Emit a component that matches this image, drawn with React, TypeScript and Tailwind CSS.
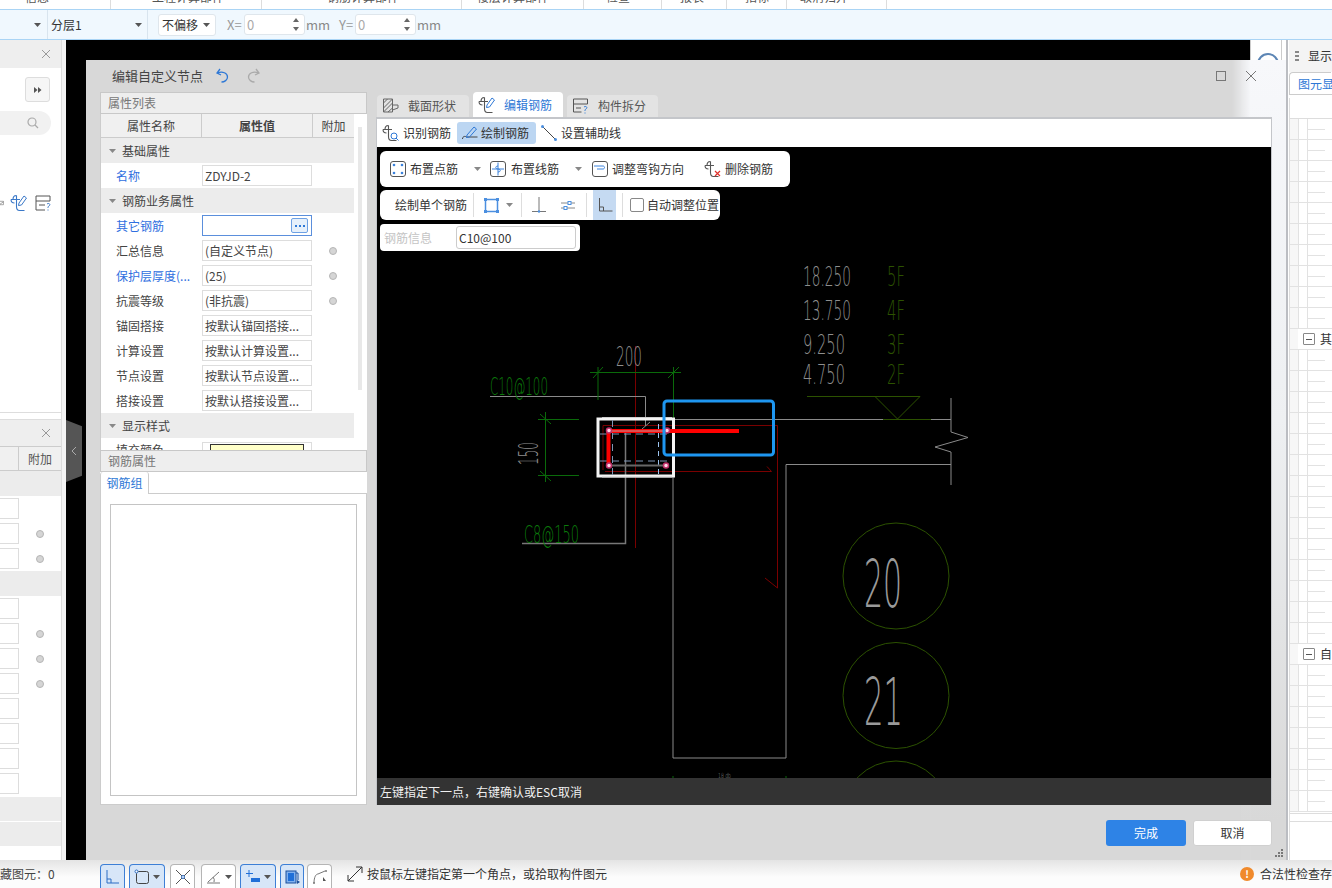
import React from 'react';

const Caret = ({ c = '#555' }: { c?: string }) => (
  <svg width="7" height="4" viewBox="0 0 7 4" className="shrink-0"><path d="M0 0h7L3.5 4z" fill={c} /></svg>
);

const Rebar = ({ c = '#555' }: { c?: string }) => (
  <path d="M1 5.500h9M6.500 1.500v11c0 2.500 1 4 3 4h5M6.500 1.500c-3 0-3.500 2-3.500 4M1 5.500c0 2.500 1.500 3.500 3.500 3.500" fill="none" stroke={c} strokeWidth="1.100" />
);

const Ico = ({ s = 18, children }: { s?: number; children: React.ReactNode }) => (
  <svg width={s} height={s} viewBox="0 0 18 18" fill="none" className="shrink-0">{children}</svg>
);

const Dot = () => <span className="block h-2 w-2 rounded-full border border-[#b5b5b5] bg-[#d5d5d5]" />;

type RowT = { l: string; v?: string; blue?: boolean; dot?: boolean; focus?: boolean };

const Row = ({ l, v, blue, dot, focus }: RowT) => (
  <div className="flex h-[25px] items-center">
    <div className={`w-[101px] pl-[15px] ${blue ? 'text-[#2f6fe0]' : 'text-[#444]'}`}>{l}</div>
    {focus ? (
      <div className="flex h-[21px] w-[110px] items-center justify-end border border-[#5b8fdc] pr-[3px]">
        <span className="flex h-[15px] w-[17px] items-center justify-center gap-[2px] rounded-[2px] border border-[#6ea1e4] bg-[#e6f0fb]">
          <span className="h-[2px] w-[2px] bg-[#2e78d6]" />
          <span className="h-[2px] w-[2px] bg-[#2e78d6]" />
          <span className="h-[2px] w-[2px] bg-[#2e78d6]" />
        </span>
      </div>
    ) : (
      <div className="flex h-[21px] w-[110px] items-center border border-[#ddd] pl-[2px] text-[#444]">{v}</div>
    )}
    <div className="flex w-[42px] justify-center">{dot && <Dot />}</div>
  </div>
);

const Group = ({ t }: { t: string }) => (
  <div className="flex h-[25px] items-center bg-[#ececec] pl-[8px] text-[#444]">
    <Caret c="#888" />
    <span className="ml-[6px]">{t}</span>
  </div>
);

const PanelHead = ({ t }: { t: string }) => (
  <div className="flex h-[22px] shrink-0 items-center border border-[#c8c8c8] bg-[#eeeeee] pl-[7px] text-[#777]">{t}</div>
);

const CadText = ({ x, y, w, size, c, children }: { x: number; y: number; w: number; size: number; c: string; children: string }) => (
  <text x={x} y={y} textLength={w} lengthAdjust="spacingAndGlyphs" fontSize={size} fill={c} className="font-['DejaVu_Sans',sans-serif] font-extralight">{children}</text>
);

const Cad = () => (
  <svg width="894" height="631" viewBox="377 147 894 631" className="block">
    <g fill="none">
      <path d="M807 396.500H920L897.500 419L875 396.500" stroke="#2c5200" />
      <path d="M673 419.500H951" stroke="#8a8a8a" />
      <path d="M883 419.500H931" stroke="#2c5200" />
      <path d="M951 398V432L968 437.500L935 447L951 452V485" stroke="#8a8a8a" />
      <path d="M951 464.500H786V758H673V476" stroke="#8a8a8a" />
      <path d="M635.500 346V548" stroke="#7a0000" />
      <path d="M603 470V425.500H777.500V588L765 578" stroke="#7a0000" />
      <path d="M605 471.500H771.500L767 466.500" stroke="#7a0000" />
      <path d="M490 396.500H645.500V426L642 429M645.500 426L650 422" stroke="#8a8a8a" />
      <path d="M625.500 433V543.500H522" stroke="#777" strokeWidth="1.500" />
      <path d="M590 372.500H681M598 367V400M673.500 367V418M593 378L603 367M668 378L679 367" stroke="#0a6a0a" />
      <path d="M538 419.500H579M538 475.500H579M545.500 412V482M540 414L551 424M540 471L551 481" stroke="#0a6a0a" />
      <path d="M673 776V778M786 776V778" stroke="#0a6a0a" />
      <rect x="598" y="419" width="75.500" height="57" stroke="#f4f4f4" strokeWidth="3" />
      <path d="M602 417.500H672M602 477H672" stroke="#cfcfcf" />
      <path d="M600 434H672M600 461H672M612.500 420V475" stroke="#7f95b5" strokeDasharray="7 5" />
      <path d="M658.500 424V475" stroke="#9cc3ef" strokeDasharray="5 4" />
      <path d="M610 465.500H666" stroke="#666" strokeWidth="2" />
      <path d="M608.500 467V431H739" stroke="#ff0000" strokeWidth="4" />
      <path d="M612 431H666" stroke="#b9a0a0" strokeWidth="1" />
      <g fill="#ffd5e5" stroke="#c0306a" strokeWidth="1.500">
        <circle cx="609" cy="430.500" r="2.500" />
        <circle cx="667" cy="430.500" r="2.500" />
        <circle cx="609" cy="465.500" r="2.500" />
        <circle cx="666" cy="465.500" r="2.500" />
      </g>
      <rect x="664" y="401" width="109.500" height="54" rx="3" stroke="#1e96f0" strokeWidth="3" />
      <ellipse cx="896" cy="576" rx="53" ry="53" stroke="#2c5200" />
      <ellipse cx="896" cy="695.500" rx="53" ry="53" stroke="#2c5200" />
      <ellipse cx="896" cy="814" rx="53" ry="53" stroke="#2c5200" />
    </g>
    <CadText x={803} y={286} w={48} size={26} c="#8e8e8e">18.250</CadText>
    <CadText x={803} y={320} w={48} size={26} c="#8e8e8e">13.750</CadText>
    <CadText x={803} y={354} w={42} size={26} c="#8e8e8e">9.250</CadText>
    <CadText x={803} y={384} w={42} size={26} c="#8e8e8e">4.750</CadText>
    <CadText x={887} y={286} w={18} size={26} c="#2c5200">5F</CadText>
    <CadText x={887} y={320} w={18} size={26} c="#2c5200">4F</CadText>
    <CadText x={887} y={354} w={18} size={26} c="#2c5200">3F</CadText>
    <CadText x={887} y={384} w={18} size={26} c="#2c5200">2F</CadText>
    <CadText x={616} y={366} w={26} size={26} c="#8e8e8e">200</CadText>
    <CadText x={490} y={395} w={58} size={25} c="#0b7a0b">C10@100</CadText>
    <CadText x={524} y={543} w={55} size={25} c="#0b7a0b">C8@150</CadText>
    <g transform="rotate(-90 538 465)">
      <CadText x={538} y={465} w={23} size={26} c="#8e8e8e">150</CadText>
    </g>
    <CadText x={864} y={607} w={38} size={66} c="#9a9a9a">20</CadText>
    <CadText x={864} y={725} w={39} size={66} c="#9a9a9a">21</CadText>
    <CadText x={718} y={778} w={13} size={7} c="#999">18 db</CadText>
  </svg>
);

const TopTab = ({ w, pl, t }: { w: number; pl: number; t: string }) => (
  <div className="h-full shrink-0 overflow-hidden border-r border-[#ddd]" style={{ width: w, paddingLeft: pl }}>
    <div className="-mt-[12px] leading-[17px] whitespace-nowrap text-[#555]">{t}</div>
  </div>
);

const Spin = () => (
  <div className="flex h-[21px] w-[61px] items-center justify-between rounded-[3px] border border-[#dfe6ec] bg-white pr-[5px] pl-[2px] text-[13px] text-[#aaa]">
    <span>0</span>
    <span className="flex flex-col gap-[5px]">
      <svg width="6" height="4" viewBox="0 0 6 4"><path d="M3 0l3 4H0z" fill="#666" /></svg>
      <svg width="6" height="4" viewBox="0 0 6 4"><path d="M3 4L0 0h6z" fill="#666" /></svg>
    </span>
  </div>
);

const rows1: RowT[] = [
  { l: '其它钢筋', blue: true, focus: true },
  { l: '汇总信息', v: '(自定义节点)', dot: true },
  { l: '保护层厚度(...', v: '(25)', blue: true, dot: true },
  { l: '抗震等级', v: '(非抗震)', dot: true },
  { l: '锚固搭接', v: '按默认锚固搭接...' },
  { l: '计算设置', v: '按默认计算设置...' },
  { l: '节点设置', v: '按默认节点设置...' },
  { l: '搭接设置', v: '按默认搭接设置...' },
];

const Cell = ({ dot }: { dot?: boolean }) => (
  <div className="flex h-[25px] items-center">
    <div className="h-[21px] w-[19px] border border-l-0 border-[#ddd]" />
    {dot && <div className="ml-[17px]"><Dot /></div>}
  </div>
);

const StatBtn = ({ on, w, children, caret }: { on?: boolean; w: number; children: React.ReactNode; caret?: boolean }) => (
  <div className={`flex h-[24px] shrink-0 items-center justify-center gap-[3px] rounded-t-[4px] border border-b-0 ${on ? 'border-[#3d7fd6] bg-[#d7e6f8]' : 'border-[#b5b5b5] bg-white'}`} style={{ width: w }}>
    {children}
    {caret && <Caret c="#555" />}
  </div>
);

const treeRows = Array.from({ length: 33 }, (_, i) => i);

export default function App() {
  return (
    <div className="relative flex h-[888px] w-[1332px] flex-col overflow-hidden bg-white font-['Noto_Sans_CJK_SC',sans-serif] text-xs text-[#333]">
      {/* top ribbon remains */}
      <div className="flex h-[9px] overflow-hidden bg-white">
        <TopTab w={111} pl={25} t="信息" />
        <TopTab w={151} pl={41} t="工程计算部件" />
        <TopTab w={200} pl={65} t="钢筋计算部件" />
        <TopTab w={122} pl={15} t="楼层计算部件" />
        <TopTab w={78} pl={22} t="检查" />
        <TopTab w={65} pl={18} t="报表" />
        <TopTab w={60} pl={18} t="指标" />
        <TopTab w={100} pl={13} t="取消归并" />
      </div>
      {/* toolbar */}
      <div className="flex h-[31px] items-center border-y border-[#a9d4f5] bg-[#f0f8fe]">
        <div className="flex h-full w-[48px] items-center justify-end border-r border-[#d8e4ee] pr-[6px]"><Caret /></div>
        <div className="flex h-full w-[100px] items-center justify-between border-r border-[#d8e4ee] pr-[5px] pl-[3px]">
          <span>分层1</span><Caret />
        </div>
        <div className="ml-[10px] flex h-[22px] w-[58px] items-center justify-between rounded-[3px] border border-[#dfe6ec] bg-white pr-[5px] pl-[3px]">
          <span>不偏移</span><Caret />
        </div>
        <span className="ml-[11px] w-[17px] text-[13px] text-[#999]">X=</span>
        <Spin />
        <span className="ml-[1px] w-[33px] text-[13px] text-[#888]">mm</span>
        <span className="w-[16px] text-[13px] text-[#999]">Y=</span>
        <Spin />
        <span className="ml-[1px] text-[13px] text-[#888]">mm</span>
      </div>
      {/* main */}
      <div className="flex h-[820px]">
        {/* left docks */}
        <div className="flex w-[66px] shrink-0 bg-[#f4f4f4]">
          <div className="flex w-[62px] flex-col gap-[6px] border-r border-[#ddd] bg-white">
            <div className="flex h-[373px] flex-col border-b border-[#ddd]">
              <div className="flex h-[28px] items-center justify-end bg-[#eeeeee] pr-[10px]">
                <svg width="10" height="10" viewBox="0 0 10 10"><path d="M1 1l8 8M9 1l-8 8" stroke="#999" /></svg>
              </div>
              <div className="mt-[9px] flex justify-end pr-[11px]">
                <div className="flex h-[25px] w-[25px] items-center justify-center rounded-[3px] border border-[#ddd] bg-[#f6f6f6]">
                  <svg width="8" height="6" viewBox="0 0 8 6"><path d="M0 0l3.500 3L0 6zM4 0l3.500 3L4 6z" fill="#555" /></svg>
                </div>
              </div>
              <div className="mt-[9px] mr-[10px] flex h-[24px] items-center justify-end rounded-r-full bg-[#f1f1f1] pr-[12px]">
                <svg width="12" height="12" viewBox="0 0 12 12" fill="none"><circle cx="5" cy="5" r="4" stroke="#aaa" strokeWidth="1.200" /><path d="M8 8l3 3" stroke="#aaa" strokeWidth="1.200" /></svg>
              </div>
              <div className="mt-[59px] flex items-center gap-[6px] pr-[9px]">
                <svg width="7" height="8" viewBox="0 0 7 8" fill="none"><path d="M0 1h6v6H0M0 6l6-4" stroke="#666" /></svg>
                <Ico s={18}><Rebar c="#3a78c8" /><path d="M9 9l5-7 2.500 2-5 7-3 .5z" stroke="#3a78c8" /></Ico>
                <Ico s={18}><path d="M2 2h14v5H2zM2 7v9h9M5 11h6" stroke="#555" /><path d="M13 10c2-1.500 4 .5 2 2-1 .5-1 1-1 2M14 15.500v1" stroke="#3a78c8" /></Ico>
              </div>
            </div>
            <div className="flex min-h-0 flex-1 flex-col">
              <div className="flex h-[27px] items-center justify-end border-t border-[#ddd] bg-[#eeeeee] pr-[10px]">
                <svg width="10" height="10" viewBox="0 0 10 10"><path d="M1 1l8 8M9 1l-8 8" stroke="#999" /></svg>
              </div>
              <div className="flex h-[25px] border-y border-[#ccc] bg-[#f0f0f0]">
                <div className="w-[19px] border-r border-[#ccc]" />
                <div className="flex flex-1 items-center justify-center text-[#555]">附加</div>
              </div>
              <div className="h-[25px] bg-[#ececec]" />
              <Cell /><Cell dot /><Cell dot />
              <div className="h-[25px] bg-[#ececec]" />
              <Cell /><Cell dot /><Cell dot /><Cell dot /><Cell /><Cell /><Cell /><Cell />
              <div className="h-px" />
              <div className="h-[24px] bg-[#ececec]" />
              <div className="h-px" />
              <div className="h-[24px] bg-[#ececec]" />
            </div>
          </div>
        </div>
        {/* canvas backdrop */}
        <div className="flex-1 bg-black" />
        {/* right docks */}
        <div className="flex w-[82px] shrink-0 bg-white">
          <div className="w-[36px] shrink-0 pt-0">
            <div className="h-[30px] w-[32px] overflow-hidden rounded-b-[4px] border border-t-0 border-[#ccc] bg-white pt-[13px] pl-[6px]">
              <div className="h-[22px] w-[22px] rounded-full border-2 border-[#5d86b5]" />
            </div>
          </div>
          <div className="flex min-w-0 flex-1 flex-col border-l-2 border-[#bbbdc2] pl-[1px]">
            <div className="flex h-[32px] shrink-0 items-center bg-[#f4f4f4] pl-[6px]">
              <span className="grid grid-cols-2 gap-[2px]">
                {[0, 1, 2, 3, 4, 5].map((i) => <span key={i} className="h-[2px] w-[2px] bg-[#888]" />)}
              </span>
              <span className="ml-[10px] whitespace-nowrap">显示</span>
            </div>
            <div className="flex h-[23px] shrink-0 border-b border-[#ccc]">
              <div className="flex w-[42px] items-center rounded-tl-[4px] border-t border-l border-[#ccc] bg-white pl-[8px] whitespace-nowrap text-[#2e78d6]">图元显</div>
            </div>
            <div className="mt-[3px] flex-1 border-l border-[#ddd] bg-white pt-[20px]">
              <div className="h-[696px] overflow-hidden border-t border-b border-[#ddd]">
                {treeRows.map((i) => (
                  <div key={i} className="flex h-[21px] border-b border-[#e2e2e2]">
                    <div className="w-[8px] shrink-0 bg-[#f7f7f7]" />
                    {i === 10 || i === 25 ? (
                      <div className="flex items-center pl-[5px]">
                        <span className="flex h-[12px] w-[12px] items-center justify-center rounded-[1px] border border-[#888] bg-white">
                          <span className="h-px w-[6px] bg-[#555]" />
                        </span>
                        <span className="ml-[5px] whitespace-nowrap">{i === 10 ? '其' : '自'}</span>
                      </div>
                    ) : (
                      <>
                        <div className="w-[10px] shrink-0 border-x border-[#e2e2e2]" />
                        <div className="flex w-[17px] items-center"><div className="h-px w-full bg-[#e2e2e2]" /></div>
                      </>
                    )}
                  </div>
                ))}
              </div>
              <div className="h-[8px] border-b border-[#ddd]" />
            </div>
          </div>
        </div>
      </div>
      {/* status bar */}
      <div className="flex h-[28px] items-end bg-[linear-gradient(to_bottom,#e4e4e4,#fcfcfc_60%)]">
        <div className="flex h-full w-[100px] shrink-0 items-center overflow-hidden whitespace-nowrap">
          <span className="-ml-[12px] text-[#444]">隐藏图元：0</span>
        </div>
        <div className="flex items-end">
          <StatBtn on w={25}><svg width="16" height="16" viewBox="0 0 16 16" fill="none"><path d="M2 1v13h12M2 10h4v4" stroke="#2a6cc4" /></svg></StatBtn>
          <div className="ml-[4px]">
            <StatBtn on w={36} caret><svg width="16" height="16" viewBox="0 0 16 16" fill="none"><rect x="2.500" y="2.500" width="12" height="12" rx="2" stroke="#444" /><circle cx="2.500" cy="2.500" r="1.500" fill="#fff" stroke="#2a6cc4" /></svg></StatBtn>
          </div>
          <div className="ml-[5px]">
            <StatBtn w={25}><svg width="18" height="18" viewBox="0 0 18 18" fill="none"><path d="M2 2l14 14M16 2L2 16" stroke="#555" /><circle cx="9" cy="9" r="1.500" stroke="#2a6cc4" fill="#fff" /></svg></StatBtn>
          </div>
          <div className="ml-[6px]">
            <StatBtn w={35} caret><svg width="16" height="16" viewBox="0 0 16 16" fill="none"><path d="M2 13L13 3M1 14h13" stroke="#777" /><path d="M7 8a5 5 0 011 5" stroke="#777" /></svg></StatBtn>
          </div>
          <div className="ml-[4px]">
            <StatBtn on w={36} caret><svg width="16" height="16" viewBox="0 0 16 16" fill="none"><path d="M4 1v7M1 4.500h7" stroke="#1f6fd8" /><rect x="6" y="9" width="9" height="4" fill="#1f6fd8" /></svg></StatBtn>
          </div>
          <div className="ml-[4px]">
            <StatBtn on w={24}><svg width="18" height="18" viewBox="0 0 18 18" fill="none"><rect x="3" y="3" width="10" height="12" fill="#7fb0ee" stroke="#1a4f9c" /><rect x="5" y="5" width="6" height="8" fill="#1f6fd8" /><path d="M13 5h2v7" stroke="#1a4f9c" /><path d="M14 12l3 2-3 2z" fill="#1a4f9c" /></svg></StatBtn>
          </div>
          <div className="ml-[3px]">
            <StatBtn w={25}><svg width="18" height="18" viewBox="0 0 18 18" fill="none"><path d="M3 15c0-6 2-9 4-9l7-3" stroke="#777" /><circle cx="3" cy="15" r="1" fill="#777" /><circle cx="15" cy="3" r="1" fill="#777" /><path d="M12 9l3 4h-3z" fill="#555" /></svg></StatBtn>
          </div>
        </div>
        <div className="flex h-full items-center">
          <svg width="16" height="16" viewBox="0 0 16 16" fill="none" className="ml-[15px]"><path d="M1 15L15 1M9 1h6v6M1 9v6h6" stroke="#333" /></svg>
          <span className="ml-[4px] whitespace-nowrap text-[#333]">按鼠标左键指定第一个角点，或拾取构件图元</span>
        </div>
        <div className="ml-auto flex h-full w-[92px] items-center overflow-hidden">
          <span className="flex h-[14px] w-[14px] shrink-0 items-center justify-center rounded-full bg-[#f08a2c] text-[10px] leading-none font-bold text-white">!</span>
          <span className="ml-[6px] whitespace-nowrap">合法性检查存在</span>
        </div>
      </div>

      {/* collapse handle */}
      <div className="absolute top-[420px] left-[66px] z-20 flex h-[62px] w-[16px] items-center justify-center bg-[#555] [clip-path:polygon(0_0,100%_10%,100%_90%,0_100%)]">
        <svg width="6" height="10" viewBox="0 0 6 10" fill="none"><path d="M5 1L1 5l4 4" stroke="#aaa" /></svg>
      </div>

      {/* dialog */}
      <div className="absolute top-[60px] left-[86px] z-10 flex h-[800px] w-[1200px] flex-col bg-[#d8d8d8]">
        <div className="pointer-events-none absolute top-0 right-0 h-full w-[54px] bg-[linear-gradient(to_bottom,#f7f8fb_0%,#eef0f2_45%,#d8d8d8_95%)] [mask-image:linear-gradient(to_right,transparent,black_35%)]" />
        {/* title */}
        <div className="relative flex h-[32px] shrink-0 items-center pl-[26px]">
          <span className="text-[13px] text-[#444]">编辑自定义节点</span>
          <svg width="16" height="16" viewBox="0 0 16 16" fill="none" className="ml-[12px]"><path d="M5 1L2 5l4 2M2.500 5c5-2 10 0 10 4 0 3-3 5-6 5" stroke="#2e78d6" strokeWidth="1.300" /></svg>
          <svg width="16" height="16" viewBox="0 0 16 16" fill="none" className="ml-[14px]"><path d="M11 1l3 4-4 2M13.500 5c-5-2-10 0-10 4 0 3 3 5 6 5" stroke="#aaa" strokeWidth="1.300" /></svg>
          <div className="ml-auto flex items-center gap-[20px] pr-[30px]">
            <span className="block h-[10px] w-[10px] border border-[#777]" />
            <svg width="10" height="10" viewBox="0 0 10 10"><path d="M0 0l10 10M10 0L0 10" stroke="#777" /></svg>
          </div>
        </div>
        {/* body */}
        <div className="relative flex h-[713px] shrink-0 gap-[9px] pl-[14px]">
          {/* left col */}
          <div className="flex w-[267px] shrink-0 flex-col">
            <PanelHead t="属性列表" />
            <div className="relative flex h-[336px] shrink-0 overflow-hidden border-l border-[#ccc] bg-white">
              <div className="w-[253px] shrink-0">
                <div className="flex h-[24px] border-b border-[#ccc] bg-[#f0f0f0] text-[#444]">
                  <div className="flex w-[101px] items-center justify-center border-r border-[#ccc]">属性名称</div>
                  <div className="flex w-[111px] items-center justify-center border-r border-[#ccc] font-bold">属性值</div>
                  <div className="flex flex-1 items-center justify-center">附加</div>
                </div>
                <Group t="基础属性" />
                <Row l="名称" v="ZDYJD-2" blue />
                <Group t="钢筋业务属性" />
                {rows1.map((r) => <Row key={r.l} {...r} />)}
                <Group t="显示样式" />
                <div className="flex h-[25px] items-start pt-[4px]">
                  <div className="w-[101px] pl-[15px] text-[#444]">填充颜色</div>
                  <div className="-mt-[0px] h-[21px] w-[110px] border border-[#ddd] px-[7px] pt-[1px]">
                    <div className="h-[16px] border border-[#333] bg-[#ffffc8]" />
                  </div>
                </div>
              </div>
              <div className="ml-[4px] h-[263px] w-[4px] translate-y-[13px] bg-[#e8e8e8]" />
            </div>
            <PanelHead t="钢筋属性" />
            <div className="flex h-[22px] shrink-0 bg-white">
              <div className="flex w-[49px] items-center justify-center rounded-t-[3px] border-x border-[#ccc] text-[#2e78d6]">钢筋组</div>
              <div className="flex-1 border-b border-[#ccc]" />
            </div>
            <div className="flex-1 border border-t-0 border-[#ccc] bg-white px-[9px] pt-[10px] pb-[8px]">
              <div className="h-full border border-[#c4c4c4]" />
            </div>
          </div>
          {/* right col */}
          <div className="flex w-[896px] shrink-0 flex-col">
            <div className="flex h-[25px] shrink-0 items-end gap-[4px] pl-[1px]">
              <div className="flex h-[22px] w-[92px] items-center rounded-t-[4px] bg-[#e3e3e3] pl-[5px] text-[#555]">
                <Ico><path d="M1.500 2h9v13h-9z" stroke="#666" /><path d="M1.500 6l4-4M1.500 11l9-9M1.500 15L10.500 6M6 15l4.500-4" stroke="#666" /><path d="M10.500 8H16v3l-5.500 2" stroke="#666" /></Ico>
                <span className="ml-[8px]">截面形状</span>
              </div>
              <div className="flex h-[25px] w-[90px] items-center rounded-t-[4px] bg-white pl-[5px] text-[#2e78d6]">
                <Ico><Rebar c="#555" /><path d="M9 9l5-7 2.500 2-5 7-3 .5z" stroke="#2e78d6" /></Ico>
                <span className="ml-[8px]">编辑钢筋</span>
              </div>
              <div className="flex h-[22px] w-[91px] items-center rounded-t-[4px] bg-[#e3e3e3] pl-[5px] text-[#555]">
                <Ico><path d="M1.500 2h14v5h-14zM1.500 7v8h8M4 11h5" stroke="#555" /><path d="M12 10c2-1.500 4 .5 2 2-1 .5-1 1-1 2M13 15.500v1" stroke="#2e78d6" /></Ico>
                <span className="ml-[8px]">构件拆分</span>
              </div>
            </div>
            <div className="flex min-h-0 flex-1 flex-col border-x border-t-2 border-[#c4c6ca] bg-white">
              <div className="flex h-[28px] shrink-0 items-center pl-[5px]">
                <div className="flex items-center">
                  <Ico><Rebar c="#555" /><circle cx="12" cy="12" r="3" stroke="#2e78d6" /><path d="M14 14l2.500 2.500" stroke="#2e78d6" /></Ico>
                  <span className="ml-[3px]">识别钢筋</span>
                </div>
                <div className="ml-[6px] flex h-[22px] w-[79px] items-center rounded-[3px] bg-[#bcd6f2] pl-[4px]">
                  <Ico><path d="M1.500 15c0-3 3-3 4-2h11" stroke="#444" /><path d="M6 11l7-8 2.500 2-7 8-3 .5z" stroke="#2e78d6" /></Ico>
                  <span className="ml-[2px]">绘制钢筋</span>
                </div>
                <div className="ml-[4px] flex items-center">
                  <Ico><path d="M2 2l14 14" stroke="#444" /><circle cx="2.500" cy="2.500" r="1.500" fill="#4b8fe0" /><circle cx="15.500" cy="15.500" r="1.500" fill="#4b8fe0" /></Ico>
                  <span className="ml-[3px]">设置辅助线</span>
                </div>
              </div>
              <div className="relative h-[631px] shrink-0 overflow-hidden bg-black">
                <Cad />
                <div className="absolute top-[4px] left-[3px] flex h-[36px] w-[410px] items-center rounded-[6px] bg-white pl-[9px] text-[#333]">
                  <Ico><rect x="1.500" y="1.500" width="15" height="15" rx="2.500" stroke="#555" /><g fill="#3a82dc"><circle cx="5" cy="5" r="1.300" /><circle cx="13" cy="5" r="1.300" /><circle cx="5" cy="13" r="1.300" /><circle cx="13" cy="13" r="1.300" /></g></Ico>
                  <span className="ml-[3px]">布置点筋</span>
                  <span className="ml-[16px]"><Caret c="#888" /></span>
                  <span className="ml-[8px]"><Ico><rect x="1.500" y="1.500" width="15" height="15" rx="2.500" stroke="#555" /><path d="M9 2.500v13M3 9h12M9 6c-3 0-3 3 0 3s3 3 0 3" stroke="#3a82dc" /></Ico></span>
                  <span className="ml-[4px]">布置线筋</span>
                  <span className="ml-[16px]"><Caret c="#888" /></span>
                  <span className="ml-[9px]"><Ico><rect x="1.500" y="1.500" width="15" height="15" rx="2.500" stroke="#555" /><path d="M3 6h9c2 0 2 3 0 3H6" stroke="#3a82dc" /></Ico></span>
                  <span className="ml-[3px]">调整弯钩方向</span>
                  <span className="ml-[20px]"><Ico><Rebar c="#555" /><path d="M11 11l5 5M16 11l-5 5" stroke="#e0302a" strokeWidth="1.200" /></Ico></span>
                  <span className="ml-[3px]">删除钢筋</span>
                </div>
                <div className="absolute top-[43px] left-[3px] flex h-[30px] w-[340px] items-center rounded-[6px] bg-white pl-[15px] text-[#333]">
                  <span>绘制单个钢筋</span>
                  <span className="ml-[6px] h-[24px] w-px bg-[#ddd]" />
                  <span className="ml-[10px]"><svg width="15" height="15" viewBox="0 0 15 15" fill="none"><rect x="1.500" y="1.500" width="12" height="12" stroke="#4b8fe0" strokeWidth="1.500" /><g fill="#4b8fe0"><rect x="0" y="0" width="3" height="3" /><rect x="12" y="0" width="3" height="3" /><rect x="0" y="12" width="3" height="3" /><rect x="12" y="12" width="3" height="3" /></g></svg></span>
                  <span className="ml-[7px]"><Caret c="#888" /></span>
                  <span className="mx-[8px] h-[24px] w-px bg-[#ddd]" />
                  <span><svg width="18" height="18" viewBox="0 0 18 18" fill="none"><path d="M9 1v14M2 15.500h14" stroke="#777" /><circle cx="9" cy="15.500" r="1.200" fill="#4b8fe0" /></svg></span>
                  <span className="ml-[11px]"><svg width="18" height="18" viewBox="0 0 18 18" fill="none"><path d="M2 7h14M2 12h14" stroke="#888" /><rect x="9" y="5.500" width="3" height="3" fill="#fff" stroke="#4b8fe0" /><rect x="5" y="10.500" width="3" height="3" fill="#fff" stroke="#4b8fe0" /></svg></span>
                  <span className="mr-[6px] ml-[9px] h-[24px] w-px bg-[#ddd]" />
                  <span className="flex h-[30px] w-[23px] items-center justify-center bg-[#c5daf2]"><svg width="16" height="18" viewBox="0 0 16 18" fill="none"><path d="M2.500 2v13h13M2.500 11h4v4" stroke="#555" /></svg></span>
                  <span className="mr-[7px] ml-[6px] h-[24px] w-px bg-[#ddd]" />
                  <span className="h-[14px] w-[14px] rounded-[2px] border border-[#888] bg-white" />
                  <span className="ml-[3px] whitespace-nowrap">自动调整位置</span>
                </div>
                <div className="absolute top-[77px] left-[3px] flex h-[27px] w-[200px] items-center rounded-[4px] bg-white pl-[4px]">
                  <span className="w-[72px] text-[#c4c4c4]">钢筋信息</span>
                  <div className="flex h-[23px] w-[120px] items-center rounded-[3px] border border-[#ccc] pl-[2px] text-[#333]">C10@100</div>
                </div>
              </div>
              <div className="flex min-h-0 flex-1 items-center bg-[#333333] pt-[1px] pl-[3px] text-[#f0f0f0]">左键指定下一点，右键确认或ESC取消</div>
            </div>
          </div>
        </div>
        {/* footer */}
        <div className="relative flex flex-1 items-start justify-end gap-[7px] pt-[15px] pr-[14px]">
          <div className="flex h-[26px] w-[80px] items-center justify-center rounded-[3px] bg-[#2e83e6] text-white">完成</div>
          <div className="flex h-[26px] w-[79px] items-center justify-center rounded-[3px] border border-[#d0d0d0] bg-white text-[#333]">取消</div>
          <span className="absolute right-[3px] bottom-[3px] grid grid-cols-3 gap-[1px]">
            {[0, 1, 2, 3, 4, 5, 6, 7, 8].map((i) => (
              <span key={i} className={`h-[2px] w-[2px] ${i === 0 || i === 1 || i === 3 ? 'bg-transparent' : 'bg-[#777]'}`} />
            ))}
          </span>
        </div>
      </div>
    </div>
  );
}
